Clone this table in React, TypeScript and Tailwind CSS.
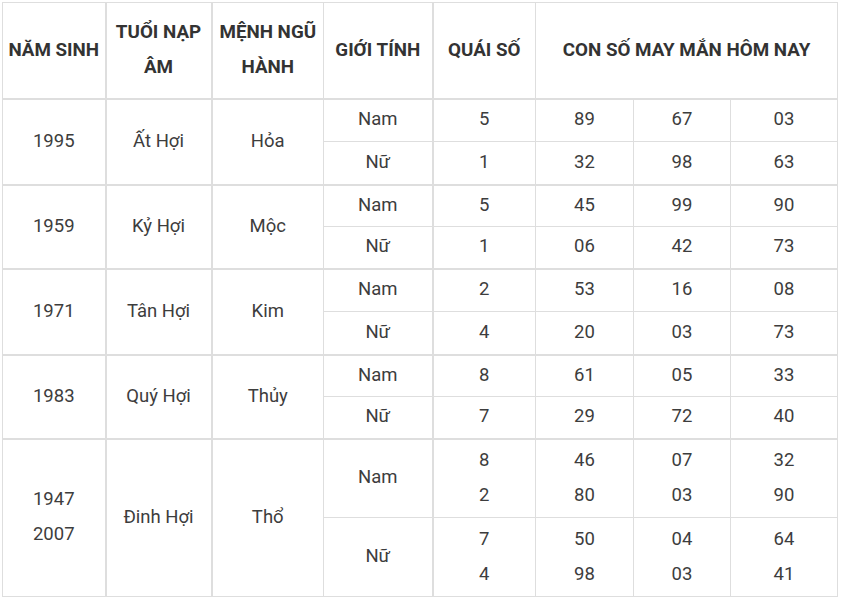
import React from 'react'

type Group = {
	year: string[];
	napAm: string;
	menh: string;
	nam: { quai: string[]; nums: string[][] };
	nu: { quai: string[]; nums: string[][] };
	tall?: boolean;
}

const groups: Group[] = [
	{ year: ["1995"], napAm: "Ất Hợi", menh: "Hỏa", nam: { quai: ["5"], nums: [["89"], ["67"], ["03"]] }, nu: { quai: ["1"], nums: [["32"], ["98"], ["63"]] } },
	{ year: ["1959"], napAm: "Kỷ Hợi", menh: "Mộc", nam: { quai: ["5"], nums: [["45"], ["99"], ["90"]] }, nu: { quai: ["1"], nums: [["06"], ["42"], ["73"]] } },
	{ year: ["1971"], napAm: "Tân Hợi", menh: "Kim", nam: { quai: ["2"], nums: [["53"], ["16"], ["08"]] }, nu: { quai: ["4"], nums: [["20"], ["03"], ["73"]] } },
	{ year: ["1983"], napAm: "Quý Hợi", menh: "Thủy", nam: { quai: ["8"], nums: [["61"], ["05"], ["33"]] }, nu: { quai: ["7"], nums: [["29"], ["72"], ["40"]] } },
	{ year: ["1947", "2007"], napAm: "Đinh Hợi", menh: "Thổ", nam: { quai: ["8", "2"], nums: [["46", "80"], ["07", "03"], ["32", "90"]] }, nu: { quai: ["7", "4"], nums: [["50", "98"], ["04", "03"], ["64", "41"]] }, tall: true },
]

function Lines({ items }: { items: string[] }) {
	return <>{items.map((t, i) => <div key={i}>{t}</div>)}</>
}

export default function App() {
	const th = "border border-[#dedede] font-bold text-[#333] text-[18.8px] px-1 align-middle"
	const td = "border border-[#dedede] text-[#3d3d3d] px-1 pb-[1px] align-middle"

	return (
		<div className="bg-white w-[843px] h-[599px] pt-[2px] pl-[2px]" style={{ fontFamily: 'Roboto, "Noto Sans", sans-serif' }}>
			<table className="table-fixed border-collapse w-[835px] text-[18.5px] leading-[35px] text-center">
				<colgroup>
					<col className="w-[103px]" />
					<col className="w-[106px]" />
					<col className="w-[112px]" />
					<col className="w-[109px]" />
					<col className="w-[103px]" />
					<col className="w-[98px]" />
					<col className="w-[97px]" />
					<col className="w-[107px]" />
				</colgroup>
				<thead>
					<tr className="h-[96px]">
						<th className={th + " border-r-2 border-b-2"}>NĂM SINH</th>
						<th className={th + " border-r-2 border-b-2"}>TUỔI NẠP ÂM</th>
						<th className={th + " border-b-2"}>MỆNH NGŨ HÀNH</th>
						<th className={th + " border-r-2 border-b-2"}>GIỚI TÍNH</th>
						<th className={th + " border-b-2"}>QUÁI SỐ</th>
						<th className={th + " border-b-2"} colSpan={3}>CON SỐ MAY MẮN HÔM NAY</th>
					</tr>
				</thead>
				<tbody>
					{groups.map((g, gi) => {
						const rowH = g.tall ? "h-[79px]" : (gi % 2 === 0 ? "h-[43px]" : "h-[42px]")
						return (
							<React.Fragment key={gi}>
								<tr className={rowH}>
									<td rowSpan={2} className={td + " border-r-2 border-t-2"}><Lines items={g.year} /></td>
									<td rowSpan={2} className={td + " border-r-2 border-t-2"}>{g.napAm}</td>
									<td rowSpan={2} className={td + " border-t-2"}>{g.menh}</td>
									<td className={td + " border-r-2 border-t-2"}>Nam</td>
									<td className={td + " border-t-2"}><Lines items={g.nam.quai} /></td>
									{g.nam.nums.map((n, i) => (
										<td key={i} className={td + " border-t-2"}><Lines items={n} /></td>
									))}
								</tr>
								<tr className={rowH}>
									<td className={td + " border-r-2"}>Nữ</td>
									<td className={td}><Lines items={g.nu.quai} /></td>
									{g.nu.nums.map((n, i) => (
										<td key={i} className={td}><Lines items={n} /></td>
									))}
								</tr>
							</React.Fragment>
						)
					})}
				</tbody>
			</table>
		</div>
	)
}
